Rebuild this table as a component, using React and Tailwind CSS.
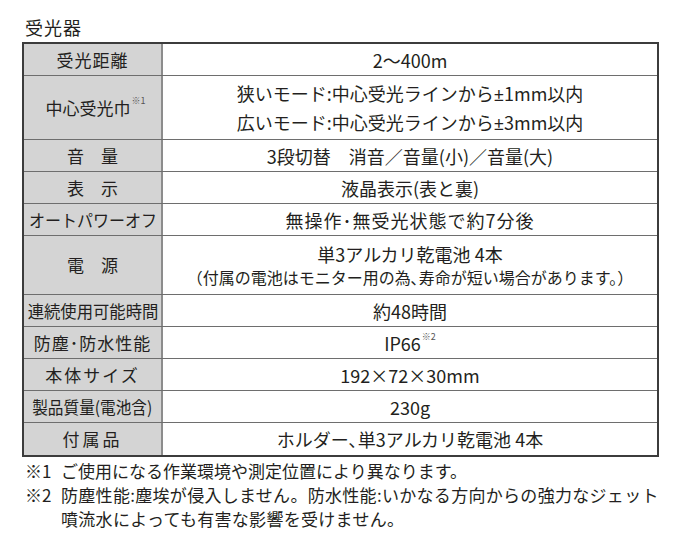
const Sup = ({ children }) => (
  <sup className="relative -top-[4px] ml-[1px] align-super text-[9px] text-[#555]">{children}</sup>
)

const PlusMinus = () => <span className="font-['Noto_Sans']">±</span>

const rows = [
  { label: '受光距離', labelCls: 'tracking-[1px]', h: 'h-[32px]', values: ['2〜400m'] },
  {
    label: (
      <>
        中心受光巾<Sup>※1</Sup>
      </>
    ),
    labelCls: 'text-[16px] pl-[6px]',
    h: 'h-[64px]',
    values: [
      <>
        狭いモード:中心受光ラインから<PlusMinus />1mm以内
      </>,
      <>
        広いモード:中心受光ラインから<PlusMinus />3mm以内
      </>,
    ],
    gap: 'gap-[6px]',
  },
  { label: '音　量', h: 'h-[32px]', values: ['3段切替　消音／音量(小)／音量(大)'] },
  { label: '表　示', h: 'h-[32px]', values: ['液晶表示(表と裏)'] },
  {
    label: 'オートパワーオフ',
    labelCls: 'scale-x-[0.94]',
    h: 'h-[32px]',
    values: [<span className="tracking-[1px]">無操作･無受光状態で約7分後</span>],
  },
  { label: '電　源', h: 'h-[59px]', power: true },
  { label: '連続使用可能時間', labelCls: 'scale-x-[0.96]', h: 'h-[32px]', values: ['約48時間'] },
  {
    label: '防塵･防水性能',
    labelCls: 'tracking-[1px]',
    h: 'h-[32px]',
    values: [
      <>
        IP66<Sup>※2</Sup>
      </>,
    ],
  },
  { label: '本体サイズ', labelCls: 'tracking-[2px]', h: 'h-[32px]', values: ['192×72×30mm'] },
  { label: '製品質量(電池含)', labelCls: 'scale-x-[0.92]', h: 'h-[32px]', values: ['230g'] },
  { label: '付属品', labelCls: 'tracking-[3px]', h: 'h-[32px]', values: ['ホルダー､単3アルカリ乾電池 4本'] },
]

export default function App() {
  return (
    <div className="min-h-[548px] w-[680px] bg-white pl-[22px] pt-[13px] text-[#231f20] [font-family:'Noto_Sans_CJK_JP',sans-serif]">
      <h2 className="pl-[3px] text-[18px] leading-[28px] tracking-[1px]">受光器</h2>

      {/* spec table */}
      <div className="mt-[1px] w-[637px] border-2 border-[#3c3c3c]">
        {rows.map((row, i) => (
          <div
            key={i}
            className={`grid grid-cols-[139px_1fr] ${row.h} ${i < rows.length - 1 ? 'border-b-[1.5px] border-[#6e6e6e]' : ''}`}
          >
            <div className="flex items-center justify-center border-r-2 border-[#8c8c8c] bg-[#d4d4d4] whitespace-nowrap">
              <span className={`inline-block text-[17px] ${row.labelCls ?? ''}`}>{row.label}</span>
            </div>
            {row.power ? (
              <div className="flex flex-col items-center justify-center">
                <span className="text-[18px] leading-[24px]">単3アルカリ乾電池 4本</span>
                <span className="text-[16px] leading-[22px]">
                  （付属の電池はモニター用の為､寿命が短い場合があります。）
                </span>
              </div>
            ) : (
              <div className={`flex flex-col items-center justify-center text-[18px] leading-[22px] ${row.gap ?? ''}`}>
                {row.values.map((v, j) => (
                  <span key={j}>{v}</span>
                ))}
              </div>
            )}
          </div>
        ))}
      </div>

      {/* notes */}
      <div className="mt-[2px] text-[17px] leading-[24px]">
        <div className="flex">
          <span className="w-[39px] shrink-0 pl-[3px]">※1</span>
          <span>ご使用になる作業環境や測定位置により異なります。</span>
        </div>
        <div className="flex">
          <span className="w-[39px] shrink-0 pl-[3px]">※2</span>
          <span className="whitespace-nowrap tracking-[0.3px]">
            防塵性能:塵埃が侵入しません。防水性能:いかなる方向からの強力なジェット
            <br />
            噴流水によっても有害な影響を受けません。
          </span>
        </div>
      </div>
    </div>
  )
}
